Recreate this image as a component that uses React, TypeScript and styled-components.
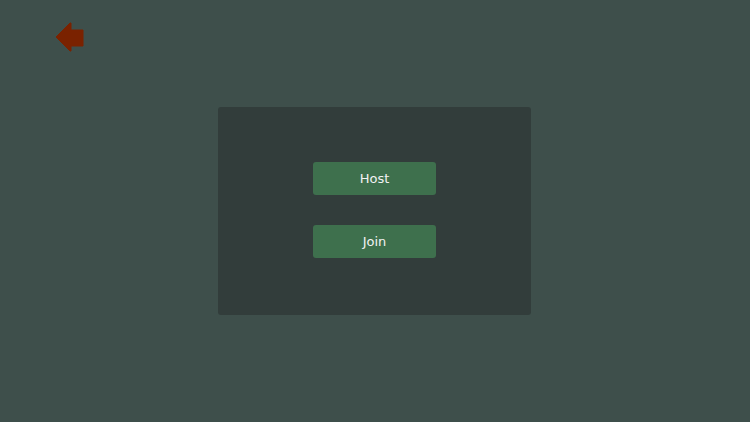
import React from "react";
import styled, { createGlobalStyle } from "styled-components";

const Global = createGlobalStyle`
  html, body { margin: 0; padding: 0; height: 100%; }
  body { background: #3e4f4b; font-family: "DejaVu Sans", Verdana, sans-serif; }
  #root { height: 100%; }
`;

const Screen = styled.div`
  width: 750px;
  height: 422px;
  background: #3e4f4b;
  display: flex;
  flex-direction: column;
  box-sizing: border-box;
  padding: 22px 0 0 55px;
`;

const BackButton = styled.button`
  width: 30px;
  height: 30px;
  padding: 0;
  border: none;
  background: transparent;
  cursor: pointer;
  display: flex;
`;

const Center = styled.div`
  display: flex;
  justify-content: flex-start;
  padding-left: 163px;
  margin-top: 55px;
`;

const Panel = styled.div`
  width: 313px;
  height: 208px;
  background: #323d3b;
  border-radius: 3px;
  display: flex;
  flex-direction: column;
  align-items: center;
  padding-top: 55px;
  box-sizing: border-box;
  gap: 30px;
`;

const MenuButton = styled.button`
  width: 123px;
  height: 33px;
  border: none;
  border-radius: 3px;
  background: #3e704d;
  color: #f2f2f2;
  font-family: "DejaVu Sans", Verdana, sans-serif;
  font-size: 13px;
  cursor: pointer;
  display: flex;
  align-items: center;
  justify-content: center;
  padding: 0;
`;

export default function App() {
  return (
    <>
      <Global />
      <Screen>
        <BackButton aria-label="Back">
          <svg width="30" height="30" viewBox="0 0 30 30">
            <path
              d="M1 15 L15 1 L16 1 L16 8 L28 8 L28 24 L16 24 L16 29 L15 29 Z"
              fill="#7a2200"
              stroke="#7a2200"
              strokeWidth="1"
              strokeLinejoin="round"
            />
          </svg>
        </BackButton>
        <Center>
          <Panel>
            <MenuButton>Host</MenuButton>
            <MenuButton>Join</MenuButton>
          </Panel>
        </Center>
      </Screen>
    </>
  );
}
